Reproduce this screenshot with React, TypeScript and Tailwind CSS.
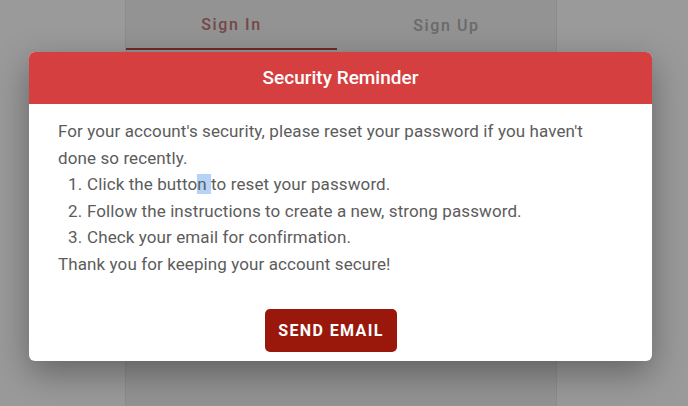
import React from "react";

const steps = [
  "Click the button to reset your password.",
  "Follow the instructions to create a new, strong password.",
  "Check your email for confirmation.",
];

export default function App() {
  return (
    <div
      className="relative w-[688px] h-[406px] overflow-hidden bg-[#9a9a9a] flex pl-[125px]"
      style={{ fontFamily: "Roboto, 'Liberation Sans', sans-serif" }}
    >
      {/* page behind the overlay */}
      <div className="w-[432px] h-full bg-[#939393] border-x border-[#8c8c8c]">
        <div className="flex h-[50px]">
          <div className="w-[211px] flex items-center justify-center border-b-2 border-[#6e2a2a] text-[16px] font-medium tracking-[1.6px] text-[#744848] pt-[1px]">
            Sign In
          </div>
          <div className="flex-1 flex items-center justify-center text-[16px] font-medium tracking-[1.6px] text-[#6a6a6a] pt-[1px]">
            Sign Up
          </div>
        </div>
      </div>

      {/* dialog */}
      <div className="absolute left-[29px] top-[52px] w-[623px] h-[309px] bg-white rounded-[6px] overflow-hidden shadow-[0_12px_34px_rgba(0,0,0,0.35)] flex flex-col">
        <div className="h-[52px] bg-[#d63f40] flex items-center justify-center text-white text-[19px] font-medium">
          Security Reminder
        </div>
        <div className="pl-[29px] pr-[30px] pt-[14px] text-[17px] leading-[26.6px] tracking-[0.1px] text-[#5c5c5c]">
          <p>
            For your account's security, please reset your password if you haven't done so
            recently.
          </p>
          <ol>
            {steps.map((s, i) => (
              <li key={i} className="flex pl-[10px]">
                <span className="w-[19px] shrink-0">{i + 1}.</span>
                {i === 0 ? (
                  <span>
                    Click the butto
                    <span className="bg-[#b5d2f7]">n&nbsp;</span>
                    to reset your password.
                  </span>
                ) : (
                  <span>{s}</span>
                )}
              </li>
            ))}
          </ol>
          <p>Thank you for keeping your account secure!</p>
        </div>
        <div className="mt-auto mb-[9px] ml-[236px]">
          <button className="w-[132px] h-[43px] rounded-[5px] bg-[#9a170c] text-white text-[16px] font-bold tracking-[1.4px]">
            SEND EMAIL
          </button>
        </div>
      </div>
    </div>
  );
}
